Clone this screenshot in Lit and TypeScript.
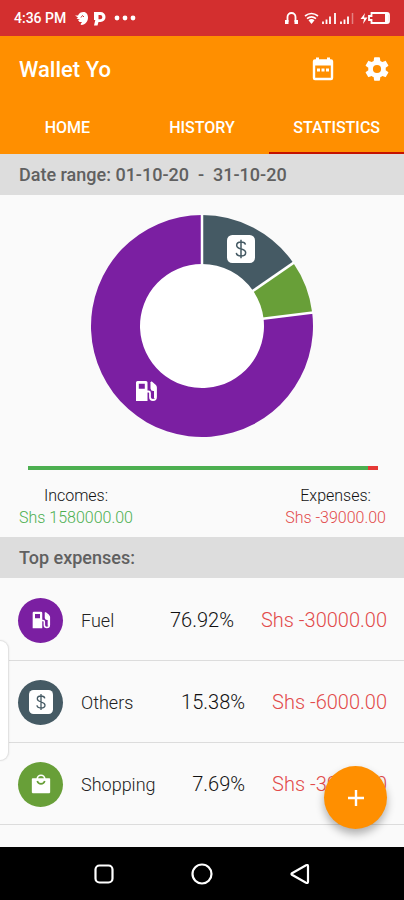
import { LitElement, html, svg, css } from "lit";
import { customElement } from "lit/decorators.js";

type Kind = "fuel" | "others" | "shopping";

interface Expense {
  kind: Kind;
  name: string;
  share: string;
  amount: string;
}

const expenses: Expense[] = [
  { kind: "fuel", name: "Fuel", share: "76.92%", amount: "Shs -30000.00" },
  { kind: "others", name: "Others", share: "15.38%", amount: "Shs -6000.00" },
  { kind: "shopping", name: "Shopping", share: "7.69%", amount: "Shs -3000.00" },
];

const glyphs = {
  fuel: svg`
    <path fill="#fff" fill-rule="evenodd" d="M2 3.500a1.500 1.500 0 0 1 1.500-1.500h8.500a1.500 1.500 0 0 1 1.500 1.500V22H2zM4.800 4.800v5h6v-5z"/>
    <path fill="none" stroke="#fff" stroke-width="1.800" d="M13 12.500h1.500q1.500 0 1.500 1.500V18q0 3 3 3t3-3V8.500q0-1-1-2L17 3"/>
    <path fill="#fff" d="M16.500 3l5.500 5v11h-2V12q-3 .5-3.500-2.500z"/>`,
  others: svg`
    <rect x="0" y="0" width="24" height="24" rx="4.500" fill="#fff"/>
    <path fill="none" stroke="#455a64" stroke-width="1.300" d="M12 4v16M15.800 8.300C15.500 6.700 14 6 12 6 9.800 6 8.300 7 8.300 8.800c0 4.200 7.700 2.200 7.700 6.400C16 17 14.300 18 12 18s-3.900-.9-4-2.700"/>`,
  shopping: svg`
    <path fill="none" stroke="#fff" stroke-width="2" d="M7.500 6a4.500 4.500 0 0 1 9 0"/>
    <path fill="#fff" d="M2 5h20q1 0 1 1v16q0 1-1 1H2q-1 0-1-1V6q0-1 1-1z"/>
    <path fill="none" stroke="#689f38" stroke-width="2" d="M7.500 8.500a4.700 4.700 0 0 0 9 0"/>`,
};

const slices: { value: number; color: string }[] = [
  { value: 6000, color: "#455a64" },
  { value: 3000, color: "#689f38" },
  { value: 30000, color: "#7b1fa2" },
];

function donut() {
  const total = slices.reduce((sum, s) => sum + s.value, 0);
  const c = 112;
  const outer = 111;
  const inner = 62;
  let turn = 0;
  const at = (r: number, t: number) => {
    const a = t * 2 * Math.PI;
    return `${(c + r * Math.sin(a)).toFixed(2)} ${(c - r * Math.cos(a)).toFixed(2)}`;
  };
  const rings = [];
  const gaps = [];
  for (const s of slices) {
    const from = turn;
    const to = (turn += s.value / total);
    const large = to - from > 0.5 ? 1 : 0;
    rings.push(
      svg`<path fill=${s.color} d="M${at(outer, from)}A${outer} ${outer} 0 ${large} 1 ${at(outer, to)}L${at(inner, to)}A${inner} ${inner} 0 ${large} 0 ${at(inner, from)}Z"/>`
    );
    gaps.push(
      svg`<path stroke="#fff" stroke-width="2.500" d="M${at(inner - 1, from)}L${at(outer + 1, from)}"/>`
    );
  }
  return [rings, gaps];
}

@customElement("app-root")
export class AppRoot extends LitElement {
  static styles = css`
    :host {
      display: flex;
      flex-direction: column;
      position: relative;
      min-height: 100vh;
      background: #fafafa;
      color: #333;
      font-family: Roboto, "Noto Sans", sans-serif;
    }
    * { box-sizing: border-box; }
    svg { display: block; flex: none; }
    button {
      display: flex;
      align-items: center;
      justify-content: center;
      padding: 0;
      border: 0;
      background: none;
      color: inherit;
      font: inherit;
      cursor: pointer;
    }
    .status {
      display: flex;
      align-items: center;
      justify-content: space-between;
      height: 36px;
      padding: 0 13px 0 14px;
      background: #d32f2f;
      color: #fff;
      font-size: 14px;
      font-weight: 500;
    }
    .cluster { display: flex; align-items: center; gap: 4px; }
    .clock { margin-right: 4px; }
    .header { background: #ff8f00; color: #fff; }
    .toolbar {
      display: flex;
      align-items: center;
      height: 66px;
      padding: 0 12px 0 19px;
    }
    h1 { flex: 1; margin: 0; font-size: 22px; font-weight: 500; }
    .actions { display: flex; gap: 24px; }
    .actions button { width: 30px; height: 32px; }
    .tabs { display: grid; grid-template-columns: repeat(3, 1fr); }
    .tab {
      height: 52px;
      border-bottom: 2px solid transparent;
      color: #fff;
      font-size: 16px;
      font-weight: 500;
      line-height: 52px;
      text-align: center;
      text-decoration: none;
    }
    .tab.active { border-color: #c41200; }
    .band {
      margin: 0;
      padding: 0 19px;
      background: #ddd;
      color: #606060;
      font-size: 18px;
      font-weight: 500;
      line-height: 41px;
      white-space: pre-wrap;
    }
    .chart {
      display: flex;
      justify-content: center;
      padding: 19px 0 28px;
    }
    .balance { display: flex; height: 4px; margin: 0 26px 0 28px; }
    .income { flex: 1; background: #4caf50; }
    .spent { width: 3%; background: #e53935; }
    .totals {
      display: flex;
      justify-content: space-between;
      margin: 0;
      padding: 15px 18px 8px 19px;
      font-size: 16px;
      font-weight: 300;
      line-height: 22px;
      text-align: center;
    }
    dd { margin: 0; }
    .totals dt { color: #111; }
    .plus { color: #4caf50; }
    .minus { color: #e24a4a; }
    ul { flex: 1; margin: 0; padding: 1px 0 0; list-style: none; }
    .row {
      display: flex;
      align-items: center;
      height: 82px;
      padding: 1px 17px 0 18px;
      border-bottom: 1px solid #dcdcdc;
      font-size: 20px;
      font-weight: 300;
    }
    .badge {
      display: flex;
      align-items: center;
      justify-content: center;
      width: 45px;
      height: 45px;
      margin-right: 18px;
      border-radius: 50%;
    }
    .fuel { background: #7b1fa2; }
    .others { background: #455a64; }
    .shopping { background: #689f38; }
    .name { flex: 1; font-size: 18px; color: #222; }
    .share { margin-right: 27px; color: #111; }
    .nav {
      display: flex;
      align-items: center;
      justify-content: center;
      gap: 68px;
      height: 53px;
      background: #000;
    }
    .nav button { width: 30px; height: 40px; }
    .fab {
      position: absolute;
      right: 17px;
      bottom: 71px;
      width: 63px;
      height: 63px;
      border-radius: 50%;
      background: #ff8f00;
      box-shadow: 0 5px 8px rgba(0, 0, 0, 0.3);
    }
    .handle {
      position: absolute;
      left: 0;
      bottom: 139px;
      width: 9px;
      height: 121px;
      border: 1px solid #e2e2e2;
      border-left: 0;
      border-radius: 0 9px 9px 0;
      background: #fff;
      box-shadow: 0 0 2px rgba(0, 0, 0, 0.1);
    }
  `;

  render() {
    return html`
      <div class="status">
        <div class="cluster">
          <span class="clock">4:36 PM</span>
          <svg width="15" height="15" viewBox="0 0 15 15">
            <path fill="#fff" d="M1 4.500h3C5 2 7 1 9.500 1 12.500 1 14 3.500 14 6.500c0 4-2.500 7-6.500 7.500l-1-.8 1.500-2.200H5.500L4 9l2-1H2.500L4 6.500z"/>
            <path fill="none" stroke="#d32f2f" stroke-width="1" d="M7 6.500l1.500-2L10 6"/>
          </svg>
          <svg width="13" height="15" viewBox="0 0 13 15">
            <path fill="#fff" fill-rule="evenodd" d="M1 1h6.500a5 5 0 0 1 0 10H5.500l-1 3.500H1L2.300 9H1zM5.500 4v4.300h1.700a2.100 2.100 0 0 0 0-4.300z"/>
          </svg>
          <svg width="28" height="6" viewBox="0 0 28 6">
            <circle cx="7" cy="3" r="2.400" fill="#fff"/><circle cx="15" cy="3" r="2.400" fill="#fff"/><circle cx="23" cy="3" r="2.400" fill="#fff"/>
          </svg>
        </div>
        <svg width="108" height="16" viewBox="0 0 108 16">
          <path fill="none" stroke="#fff" stroke-width="1.800" d="M4.500 12V7a4 4 0 0 1 8 0v5"/>
          <path fill="#fff" d="M2 10h3.500v4H2zM11.500 10H15v4h-3.500z"/>
          <path fill="none" stroke="#fff" stroke-width="1.700" d="M22 6q6.500-5 13 0M24 8.600q4.500-3.400 9 0"/>
          <path fill="#fff" d="M25.500 10.200q3-2.200 6 0l-3 3.800z"/>
          <path stroke="#fff" stroke-width="1.800" d="M40 14v-2.500M43.500 14V9.500M47 14V6.500M52 14V3M58 14v-2.500M61.500 14V9.500M65 14V6.500"/>
          <path stroke="#fff" stroke-opacity=".4" stroke-width="1.500" d="M69.500 14V3"/>
          <path fill="#fff" d="M82 3l-4.500 6H81l-1 5 4.500-6.500H81z"/>
          <path fill="none" stroke="#fff" stroke-width="1.800" d="M88.500 3H104q2 0 2 2v6q0 2-2 2H88.500V10H86V6h2.500z"/>
          <path fill="#fff" d="M102 4h3v8h-3z"/>
        </svg>
      </div>

      <header class="header">
        <div class="toolbar">
          <h1>Wallet Yo</h1>
          <div class="actions">
            <button aria-label="Choose dates">
              <svg width="22" height="24" viewBox="0 0 22 24">
                <path fill="none" stroke="#fff" stroke-width="2.400" d="M3 3.500h16q1 0 1 1V21q0 1-1 1H3q-1 0-1-1V4.500q0-1 1-1z"/>
                <path fill="#fff" d="M2 3h18v5.500H2zM4 .5h3V4H4zM15 .5h3V4h-3zM5 11.500h3v3H5zM9.500 11.500h3v3h-3zM14 11.500h3v3h-3z"/>
              </svg>
            </button>
            <button aria-label="Settings">
              <svg width="28" height="28" viewBox="0 0 24 24">
                <path fill="#fff" d="M19.430 12.980c.04-.32.07-.64.07-.98s-.03-.66-.07-.98l2.110-1.650c.19-.15.24-.42.12-.64l-2-3.460c-.12-.22-.39-.3-.61-.22l-2.490 1c-.52-.4-1.080-.73-1.690-.98l-.38-2.650A.488.488 0 0 0 14 2h-4c-.25 0-.46.18-.49.42l-.38 2.650c-.61.25-1.170.59-1.690.98l-2.490-1c-.23-.09-.49 0-.61.22l-2 3.460c-.13.22-.07.49.12.64l2.110 1.650c-.04.32-.07.65-.07.98s.03.66.07.98l-2.110 1.650c-.19.15-.24.42-.12.64l2 3.460c.12.22.39.3.61.22l2.490-1c.52.4 1.080.73 1.690.98l.38 2.650c.03.24.24.42.49.42h4c.25 0 .46-.18.49-.42l.38-2.650c.61-.25 1.170-.59 1.690-.98l2.490 1c.23.09.49 0 .61-.22l2-3.460c.12-.22.07-.49-.12-.64zM12 15.500A3.500 3.500 0 1 1 12 8.500a3.500 3.500 0 0 1 0 7z"/>
              </svg>
            </button>
          </div>
        </div>
        <nav class="tabs">
          <a class="tab" href="#home">HOME</a>
          <a class="tab" href="#history">HISTORY</a>
          <a class="tab active" href="#statistics" aria-current="page">STATISTICS</a>
        </nav>
      </header>

      <p class="band">Date range: 01-10-20  -  31-10-20</p>

      <div class="chart">
        <svg width="224" height="224" viewBox="0 0 224 224" role="img" aria-label="Expenses by category">
          <circle cx="112" cy="112" r="63" fill="#fff"/>
          ${donut()}
          <svg x="137" y="21" width="28" height="28" viewBox="0 0 24 24">${glyphs.others}</svg>
          <svg x="44" y="165" width="24" height="24" viewBox="0 0 24 24">${glyphs.fuel}</svg>
        </svg>
      </div>

      <div class="balance"><div class="income"></div><div class="spent"></div></div>
      <dl class="totals">
        <div><dt>Incomes:</dt><dd class="plus">Shs 1580000.00</dd></div>
        <div><dt>Expenses:</dt><dd class="minus">Shs -39000.00</dd></div>
      </dl>

      <h2 class="band">Top expenses:</h2>
      <ul>
        ${expenses.map(
          (e) => html`<li class="row">
            <span class="badge ${e.kind}">
              <svg width=${e.kind === "others" ? 24 : 20} height=${e.kind === "others" ? 24 : 20} viewBox="0 0 24 24">${glyphs[e.kind]}</svg>
            </span>
            <span class="name">${e.name}</span>
            <span class="share">${e.share}</span>
            <span class="minus">${e.amount}</span>
          </li>`
        )}
      </ul>

      <div class="nav">
        <button aria-label="Recent apps">
          <svg width="22" height="22" viewBox="0 0 22 22"><rect x="2.500" y="2.500" width="17" height="17" rx="4" fill="none" stroke="#fff" stroke-width="2.200"/></svg>
        </button>
        <button aria-label="Home screen">
          <svg width="22" height="22" viewBox="0 0 22 22"><circle cx="11" cy="11" r="9.500" fill="none" stroke="#fff" stroke-width="2.200"/></svg>
        </button>
        <button aria-label="Back">
          <svg width="22" height="22" viewBox="0 0 22 22"><path d="M3 10.200L17 2.200q2-.7 2 1v15.600q0 1.700-2 1L3 11.800q-1-.8 0-1.600z" fill="none" stroke="#fff" stroke-width="2.200"/></svg>
        </button>
      </div>

      <div class="handle"></div>
      <button class="fab" aria-label="Add transaction">
        <svg width="18" height="18" viewBox="0 0 18 18"><path d="M9 1v16M1 9h16" stroke="#fff" stroke-width="2.400"/></svg>
      </button>
    `;
  }
}
